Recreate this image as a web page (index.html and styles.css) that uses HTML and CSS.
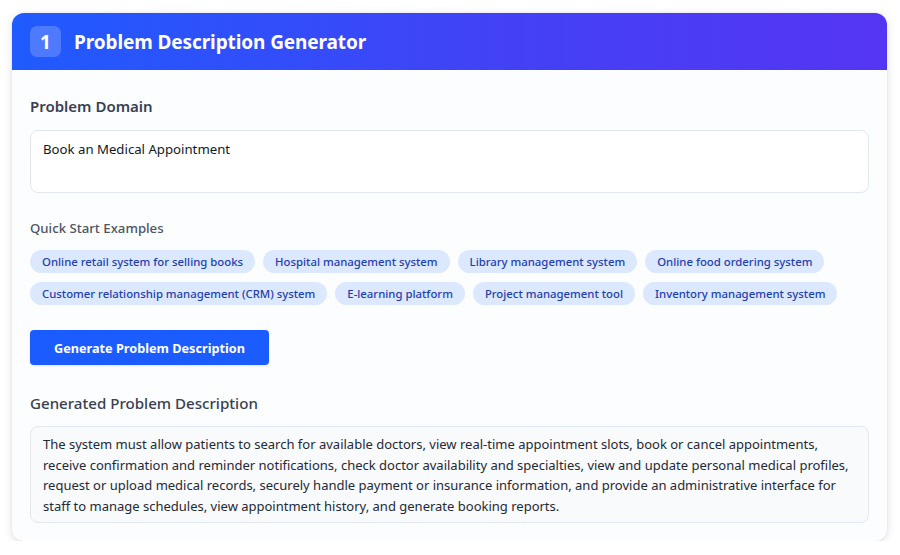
FILE: index.html
```html
<!DOCTYPE html>
<html>
<head>
<meta charset="utf-8">
<link rel="stylesheet" href="styles.css">
</head>
<body>
<div class="card">
  <div class="header">
    <span class="badge">1</span>
    <h1 class="title">Problem Description Generator</h1>
  </div>
  <div class="body">
    <label class="label">Problem Domain</label>
    <div class="input">Book an Medical Appointment</div>
    <div class="sub">Quick Start Examples</div>
    <div class="chips">
      <span class="chip">Online retail system for selling books</span>
      <span class="chip">Hospital management system</span>
      <span class="chip">Library management system</span>
      <span class="chip">Online food ordering system</span>
      <span class="chip">Customer relationship management (CRM) system</span>
      <span class="chip">E-learning platform</span>
      <span class="chip">Project management tool</span>
      <span class="chip">Inventory management system</span>
    </div>
    <button class="btn">Generate Problem Description</button>
    <div class="label out-label">Generated Problem Description</div>
    <div class="output">The system must allow patients to search for available doctors, view real-time appointment slots, book or cancel appointments, receive confirmation and reminder notifications, check doctor availability and specialties, view and update personal medical profiles, request or upload medical records, securely handle payment or insurance information, and provide an administrative interface for staff to manage schedules, view appointment history, and generate booking reports.</div>
  </div>
</div>
</body>
</html>
```

FILE: styles.css
```css
* { box-sizing: border-box; }
html, body { margin: 0; background: #ffffff; }
body {
  padding: 13px 13px 0 12px;
  font-family: "Noto Sans", "Open Sans", sans-serif;
  color: #1f2937;
}
.card {
  width: 875px;
  border-radius: 12px;
  background: #fcfdff;
  box-shadow: 0 2px 10px rgba(0,0,0,0.12), 0 0 2px rgba(0,0,0,0.08);
  overflow: hidden;
}
.header {
  height: 57px;
  display: flex;
  align-items: center;
  padding: 0 18px;
  gap: 13px;
  background: linear-gradient(90deg, #1f5bff 0%, #4242f6 55%, #5535f4 100%);
}
.badge {
  width: 31px;
  height: 31px;
  border-radius: 7px;
  background: rgba(255,255,255,0.2);
  color: #fff;
  font-weight: 700;
  font-size: 19px;
  display: flex;
  align-items: center;
  justify-content: center;
}
.title {
  margin: 0;
  color: #fff;
  font-size: 19px;
  font-weight: 700;
  letter-spacing: -0.1px;
}
.body {
  padding: 26px 18px 18px 18px;
  display: flex;
  flex-direction: column;
}
.label {
  font-size: 15px;
  font-weight: 600;
  color: #374151;
  line-height: 20px;
}
.input {
  margin-top: 14px;
  height: 63px;
  border: 1px solid #e2e8f0;
  border-radius: 8px;
  background: #fff;
  padding: 8px 12px;
  font-size: 13.2px;
  line-height: 20px;
  color: #111827;
}
.sub {
  margin-top: 26px;
  font-size: 13.2px;
  font-weight: 500;
  color: #4b5563;
  line-height: 18px;
}
.chips {
  margin-top: 13px;
  display: flex;
  flex-wrap: wrap;
  gap: 9px 8px;
}
.chip {
  height: 23px;
  display: inline-flex;
  align-items: center;
  padding: 0 12px;
  border-radius: 12px;
  background: #dbe8fe;
  color: #1e40af;
  font-size: 11.35px;
  font-weight: 500;
}
.btn {
  margin-top: 25px;
  align-self: flex-start;
  width: 239px;
  height: 35px;
  border: none;
  border-radius: 4px;
  background: #1a5cff;
  color: #fff;
  font-family: inherit;
  font-size: 12.7px;
  font-weight: 700;
  box-shadow: 0 1px 2px rgba(0,0,0,0.1);
}
.out-label {
  margin-top: 28px;
  font-size: 15.1px;
  font-weight: 500;
}
.output {
  margin-top: 13px;
  border: 1px solid #e2e8f0;
  border-radius: 8px;
  background: #f8fafc;
  padding: 7px 12px 6px 12px;
  font-size: 13px;
  line-height: 20.5px;
  color: #1f2937;
}
```
